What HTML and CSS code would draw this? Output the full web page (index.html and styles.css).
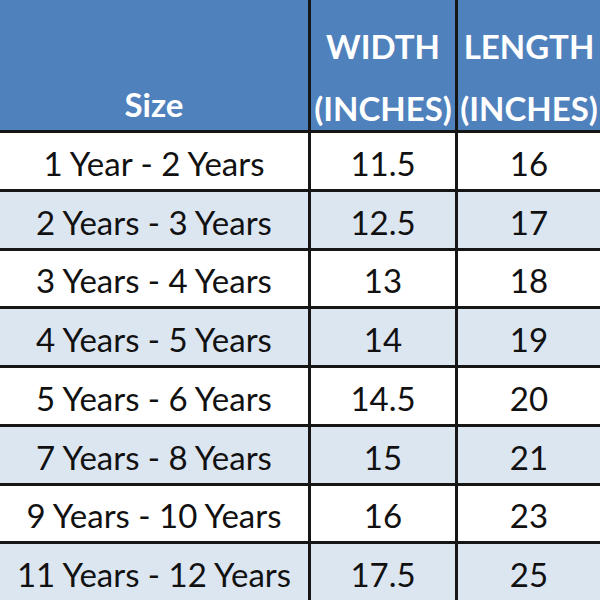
FILE: index.html
```html
<!DOCTYPE html>
<html lang="en">

<head>
    <meta charset="UTF-8">
    <meta name="viewport" content="width=device-width, initial-scale=1.0">
    <title>Size Chart</title>
    <link rel="stylesheet" href="styles.css">
</head>

<body>
    <div class="size-chart">
        <div class="row head">
            <div class="cell size"><span>Size</span></div>
            <div class="cell"><span>WIDTH</span><span>(INCHES)</span></div>
            <div class="cell"><span>LENGTH</span><span>(INCHES)</span></div>
        </div>
        <div class="row">
            <div class="cell">1 Year - 2 Years</div>
            <div class="cell">11.5</div>
            <div class="cell">16</div>
        </div>
        <div class="row alt">
            <div class="cell">2 Years - 3 Years</div>
            <div class="cell">12.5</div>
            <div class="cell">17</div>
        </div>
        <div class="row">
            <div class="cell">3 Years - 4 Years</div>
            <div class="cell">13</div>
            <div class="cell">18</div>
        </div>
        <div class="row alt">
            <div class="cell">4 Years - 5 Years</div>
            <div class="cell">14</div>
            <div class="cell">19</div>
        </div>
        <div class="row">
            <div class="cell">5 Years - 6 Years</div>
            <div class="cell">14.5</div>
            <div class="cell">20</div>
        </div>
        <div class="row alt">
            <div class="cell">7 Years - 8 Years</div>
            <div class="cell">15</div>
            <div class="cell">21</div>
        </div>
        <div class="row">
            <div class="cell">9 Years - 10 Years</div>
            <div class="cell">16</div>
            <div class="cell">23</div>
        </div>
        <div class="row alt">
            <div class="cell">11 Years - 12 Years</div>
            <div class="cell">17.5</div>
            <div class="cell">25</div>
        </div>
    </div>
</body>

</html>
```

FILE: styles.css
```css
* {
    margin: 0;
    padding: 0;
    box-sizing: border-box;
}

body {
    font-family: 'Lato', 'Liberation Sans', sans-serif;
    background-color: #ffffff;
    color: #111111;
}

.size-chart {
    width: 600px;
    height: 600px;
    display: grid;
    grid-template-columns: 308px 144px 142px;
    grid-template-rows: 130px repeat(8, 1fr);
    gap: 3px;
    background-color: #161616;
}

.row {
    display: contents;
}

.cell {
    display: flex;
    align-items: center;
    justify-content: center;
    padding-top: 4px;
    background-color: #ffffff;
    font-size: 33px;
    white-space: nowrap;
}

.row.alt .cell {
    background-color: #dce6f1;
}

.row.head .cell {
    flex-direction: column;
    justify-content: flex-end;
    gap: 26px;
    padding: 0 0 4px;
    background-color: #4f81bd;
    color: #ffffff;
    font-weight: bold;
    line-height: 36px;
}

.row.head .cell.size {
    padding-bottom: 8px;
}
```
